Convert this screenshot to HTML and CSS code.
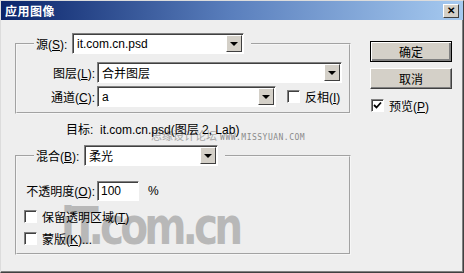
FILE: index.html
```html
<!DOCTYPE html>
<html lang="zh-CN">
<head>
  <meta charset="UTF-8" />
  <title>应用图像</title>
  <link rel="stylesheet" href="styles.css">
</head>
<body>
  <div class="dialog">
    <div class="mark-big">iT.com.cn</div>
    <div class="mark-small">思缘设计论坛 <span>WWW.MISSYUAN.COM</span></div>

    <div class="titlebar">
      <span class="title">应用图像</span>
      <span class="close">&#x2715;</span>
    </div>
    <div class="content">
      <div class="main">
        <div class="group source">
          <div class="group-head">
            <span class="head-label src">源(<u>S</u>):</span>
            <span class="select w-src">it.com.cn.psd<span class="arrow"></span></span>
          </div>
          <div class="rows">
            <div class="row">
              <span class="lbl">图层(<u>L</u>):</span>
              <span class="select w-layer">合并图层<span class="arrow"></span></span>
            </div>
            <div class="row">
              <span class="lbl">通道(<u>C</u>):</span>
              <span class="select w-chan">a<span class="arrow"></span></span>
              <span class="check invert-check"></span>
              <span class="check-text">反相(<u>I</u>)</span>
            </div>
          </div>
        </div>

        <p class="target">目标:&nbsp; it.com.cn.psd(图层 2, Lab)</p>

        <div class="group blend">
          <div class="group-head">
            <span class="head-label mix">混合(<u>B</u>):</span>
            <span class="select w-mix">柔光<span class="arrow"></span></span>
          </div>
          <div class="rows blend-rows">
            <div class="row">
              <span class="lbl">不透明度(<u>O</u>):</span>
              <span class="input w-opacity">100</span>
              <span class="unit">%</span>
            </div>
            <div class="row check-row first">
              <span class="check"></span>
              <span class="check-text">保留透明区域(<u>T</u>)</span>
            </div>
            <div class="row check-row">
              <span class="check"></span>
              <span class="check-text">蒙版(<u>K</u>)...</span>
            </div>
          </div>
        </div>
      </div>

      <div class="side">
        <div class="button default">确定</div>
        <div class="button">取消</div>
        <div class="preview">
          <span class="check checked">
            <svg width="9" height="9" viewBox="0 0 9 9"><path d="M1 4 L3.5 6.5 L8 1.5" fill="none" stroke="#000" stroke-width="1.8"/></svg>
          </span>
          <span class="check-text">预览(<u>P</u>)</span>
        </div>
      </div>
    </div>
  </div>
</body>
</html>
```

FILE: styles.css
```css
* { box-sizing: border-box; }
body { margin: 0; font-family: "Liberation Sans", "Noto Sans CJK SC", sans-serif; font-size: 12px; color: #000; }
u { text-decoration: underline; }

.dialog { position: relative; width: 464px; height: 273px; background: #eeeeee; border: 1px solid #dcdcdc; border-right-color: #404040; border-bottom-color: #404040; box-shadow: inset -1px -1px 0 #808080; overflow: hidden; }

.titlebar { position: relative; z-index: 1; height: 19px; display: flex; align-items: center; justify-content: space-between; padding: 0 4px 0 4px; background: linear-gradient(to right, #0a246a, #5a7fbd 50%, #a6caf0); }
.title { color: #fff; font-weight: bold; font-size: 12px; letter-spacing: 0.5px; }
.close { width: 16px; height: 14px; margin-top: 1px; background: #d4d0c8; border: 1px solid; border-color: #fff #404040 #404040 #fff; font-size: 10px; font-weight: bold; line-height: 12px; text-align: center; }

.content { position: relative; z-index: 1; display: flex; padding-top: 21px; padding-left: 14px; }
.main { width: 336px; }
.side { margin-left: 19px; }

/* group box with the header control sitting on its top edge */
.group { width: 336px; margin-top: 2px; border: 2px groove #f6f6f6; }
.group-head { display: flex; align-items: center; width: fit-content; margin: -12px 0 0 17px; padding: 0 7px 0 2px; background: #eeeeee; }
.head-label.src { width: 36px; }
.head-label.mix { width: 48px; }

.rows { padding: 8px 0 5px 0; display: flex; flex-direction: column; gap: 3px; }
.row { display: flex; align-items: center; height: 21px; }
.lbl { width: 80px; text-align: right; padding-right: 2px; }

.select { position: relative; display: flex; align-items: center; height: 21px; padding-left: 4px; background: #fff; border: 1px solid; border-color: #808080 #fff #fff #808080; box-shadow: inset 1px 1px 0 #404040; }
.arrow { position: absolute; right: 1px; top: 1px; width: 16px; height: 17px; background: #d4d0c8; border: 1px solid; border-color: #fff #404040 #404040 #fff; }
.arrow::after { content: ""; position: absolute; left: 3px; top: 6px; border-left: 4px solid transparent; border-right: 4px solid transparent; border-top: 4px solid #000; }
.w-src { width: 172px; }
.w-layer { width: 245px; }
.w-chan { width: 179px; }
.w-mix { width: 134px; }

.check { position: relative; display: inline-block; width: 13px; height: 13px; background: #fff; border: 1px solid; border-color: #808080 #fff #fff #808080; box-shadow: inset 1px 1px 0 #404040; flex-shrink: 0; }
.check svg { position: absolute; left: 1px; top: 1px; }
.check-text { margin-left: 5px; }
.invert-check { margin-left: 11px; }

.target { margin: 9px 0 18px 51px; height: 14px; line-height: 14px; }

.blend-rows { padding: 14px 0 7px 0; gap: 0; }
.input { display: flex; align-items: center; width: 42px; height: 20px; padding-left: 3px; background: #fff; border: 1px solid; border-color: #808080 #fff #fff #808080; box-shadow: inset 1px 1px 0 #404040; }
.unit { margin-left: 9px; }
.check-row { height: 16px; padding-left: 7px; }
.check-row.first { margin-top: 7px; margin-bottom: 6px; }

.button { width: 82px; height: 21px; margin-bottom: 6px; display: flex; align-items: center; justify-content: center; background: #d4d0c8; border: 1px solid; border-color: #fff #404040 #404040 #fff; box-shadow: inset -1px -1px 0 #808080; }
.button.default { border: 1px solid #000; box-shadow: inset 1px 1px 0 #fff, inset -2px -2px 0 #808080; }
.preview { display: flex; align-items: center; margin-top: 8px; padding-left: 1px; }

.mark-small { position: absolute; z-index: 0; left: 150px; top: 130px; color: #a8a8a8; font-size: 11px; line-height: 11px; }
.mark-small span { font-family: "DejaVu Sans Mono", monospace; font-size: 8px; letter-spacing: 0.5px; color: #8a8a8a; }
.mark-big { position: absolute; z-index: 0; left: 60px; top: 195px; font-family: "DejaVu Sans", sans-serif; font-weight: bold; font-size: 52px; letter-spacing: -5px; color: #b8b8b8; transform: scaleX(0.78); transform-origin: left center; }
```
